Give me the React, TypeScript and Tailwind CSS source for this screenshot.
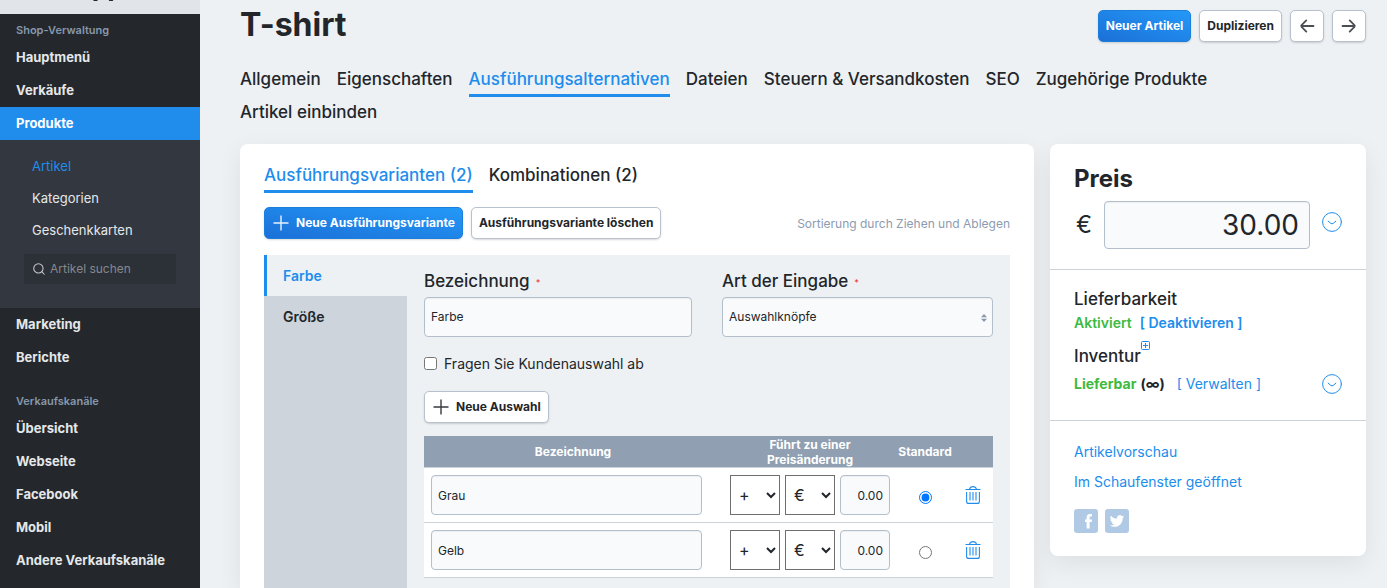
import type { ReactNode } from 'react';
import { useState } from 'react';
import { Search } from 'lucide-react';

interface Choice {
    id: string;
    name: string;
    surcharge: string;
}

const productTabs = [
    'Allgemein',
    'Eigenschaften',
    'Ausführungsalternativen',
    'Dateien',
    'Steuern & Versandkosten',
    'SEO',
    'Zugehörige Produkte',
    'Artikel einbinden',
];

const channels = ['Übersicht', 'Webseite', 'Facebook', 'Mobil', 'Andere Verkaufskanäle'];

const choices: Choice[] = [
    { id: 'grau', name: 'Grau', surcharge: '0.00' },
    { id: 'gelb', name: 'Gelb', surcharge: '0.00' },
];

const inputClass =
    'h-10 rounded border border-[#b4bfcc] bg-[#f9fafc] px-1.5 text-xs text-[#22262a] shadow-[inset_0_1px_1px_rgba(0,0,0,0.05)]';

function NavLink({ children, active }: { children: ReactNode; active?: boolean }) {
    return (
        <a
            href="#"
            className={`block px-4 text-[13px] leading-[33px] font-bold ${active ? 'bg-[#208ded] text-white' : 'text-[#e4e7ea]'}`}
        >
            {children}
        </a>
    );
}

function NavHeading({ children }: { children: ReactNode }) {
    return <h2 className="px-4 text-[11px] leading-[22px] font-semibold text-[#8798ad]">{children}</h2>;
}

function Tab({ children, active }: { children: ReactNode; active?: boolean }) {
    return (
        <a
            href="#"
            className={`border-b-3 text-[17px] leading-[30px] font-medium ${active ? 'border-[#208ded] text-[#208ded]' : 'border-transparent'}`}
        >
            {children}
        </a>
    );
}

function Button({ children, primary, label }: { children: ReactNode; primary?: boolean; label?: string }) {
    return (
        <button
            type="button"
            aria-label={label}
            className={`flex h-8 shrink-0 items-center gap-1.5 rounded-[5px] border px-[7px] text-xs font-bold whitespace-nowrap shadow-[0_1px_2px_rgba(0,0,0,0.15)] ${
                primary
                    ? 'border-[#1d7fdc] bg-linear-to-tr from-[#1c70d8] to-[#2499f7] text-white'
                    : 'border-[#b8c2cf] bg-white'
            }`}
        >
            {children}
        </button>
    );
}

function PlusIcon() {
    return (
        <svg viewBox="0 0 18 18" fill="none" stroke="currentColor" strokeWidth="1.4" className="size-[18px] opacity-90">
            <path d="M1.5 9 H16.5 M9 1.5 V16.5" />
        </svg>
    );
}

function ArrowIcon({ direction }: { direction: 'left' | 'right' }) {
    return (
        <svg
            viewBox="0 0 18 18"
            fill="none"
            stroke="#4a4e53"
            strokeWidth="1.8"
            strokeLinecap="round"
            strokeLinejoin="round"
            className={`size-[18px] ${direction === 'right' ? 'rotate-180' : ''}`}
        >
            <path d="M15.5 9 H3.2 M8.3 3.4 L3.6 8.1 Q2.8 9 3.6 9.9 L8.3 14.6" />
        </svg>
    );
}

function TrashIcon() {
    return (
        <svg viewBox="0 0 16 18" fill="none" stroke="currentColor" strokeWidth="1.1" className="h-[18px] w-4">
            <path d="M0.5 3.5 H15.5 M4.5 3.2 C5 1.4 6 0.6 8 0.6 C10 0.6 11 1.4 11.5 3.2" />
            <path d="M1.6 6 V15.4 Q1.6 17.4 3.6 17.4 H12.4 Q14.4 17.4 14.4 15.4 V6" />
            <path d="M5 6 V14.6 M8 6 V14.6 M11 6 V14.6" />
        </svg>
    );
}

function ExpandButton({ label }: { label: string }) {
    return (
        <button type="button" aria-label={label} className="size-5 shrink-0 text-[#208ded]">
            <svg viewBox="0 0 20 20" fill="none" stroke="currentColor" strokeLinecap="round" className="size-5">
                <circle cx="10" cy="10" r="9.4" />
                <path d="M6.2 9.2 L8.8 11.4 Q10 12.2 11.2 11.4 L13.8 9.2" />
            </svg>
        </button>
    );
}

function Sidebar() {
    return (
        <aside className="w-50 shrink-0 bg-[#24272b]">
            <div className="h-3.5 bg-[#e1e5ea]">
                <svg viewBox="0 0 200 14" fill="none" stroke="#24272b" strokeWidth="1.4" className="h-3.5 w-50">
                    <path d="M93.5 0 Q95.5 0.8 97.5 0 M109 0 Q111 0.8 113 0" />
                </svg>
            </div>
            <nav aria-label="Shop">
                <div className="pt-[5px]">
                    <NavHeading>Shop-Verwaltung</NavHeading>
                </div>
                <NavLink>Hauptmenü</NavLink>
                <NavLink>Verkäufe</NavLink>
                <NavLink active>Produkte</NavLink>
                <div className="bg-[#33373f] px-6 pt-2.5 pb-6">
                    <ul className="px-2 text-[13px] leading-8 text-[#e4e7ea]">
                        <li><a href="#" className="text-[#208ded]">Artikel</a></li>
                        <li><a href="#">Kategorien</a></li>
                        <li><a href="#">Geschenkkarten</a></li>
                    </ul>
                    <label className="mt-2 flex h-[30px] items-center gap-1 bg-[#2c3037] px-2">
                        <Search size={14} strokeWidth={1.8} className="shrink-0 text-[#c8ccd1]" />
                        <input
                            type="search"
                            aria-label="Artikel suchen"
                            placeholder="Artikel suchen"
                            className="w-full min-w-0 text-xs placeholder:text-[#85898f]"
                        />
                    </label>
                </div>
                <NavLink>Marketing</NavLink>
                <NavLink>Berichte</NavLink>
                <div className="pt-4">
                    <NavHeading>Verkaufskanäle</NavHeading>
                </div>
                {channels.map((channel) => (
                    <NavLink key={channel}>{channel}</NavLink>
                ))}
            </nav>
        </aside>
    );
}

function Required() {
    return <span className="ml-1.5 align-middle text-[9px] text-[#f0413c]">*</span>;
}

function ChoiceTable() {
    const [preset, setPreset] = useState('grau');

    return (
        <table className="mt-[13px] w-full table-fixed border-collapse bg-white">
            <thead className="bg-[#909fb1] text-xs leading-[15px] text-white">
                <tr className="h-8 border-b border-[#c9d1da]">
                    <th>Bezeichnung</th>
                    <th className="w-44 px-8">Führt zu einer Preisänderung</th>
                    <th className="w-[54px]">Standard</th>
                    <th className="w-[41px]" aria-label="Löschen" />
                </tr>
            </thead>
            <tbody>
                {choices.map((choice) => (
                    <tr key={choice.id} className="h-[55px] border-b border-[#cbd2da]">
                        <td className="pr-5 pl-[7px]">
                            <input
                                type="text"
                                aria-label="Bezeichnung"
                                defaultValue={choice.name}
                                className={`${inputClass} block w-full`}
                            />
                        </td>
                        <td>
                            <div className="flex gap-[5px] px-2">
                                <select aria-label="Vorzeichen" className="h-10 w-[50px] border border-[#6f6f6f] bg-white px-1 text-base">
                                    <option>+</option>
                                    <option>-</option>
                                </select>
                                <select aria-label="Einheit" className="h-10 w-[50px] border border-[#6f6f6f] bg-white px-1 text-base">
                                    <option>€</option>
                                    <option>%</option>
                                </select>
                                <input
                                    type="text"
                                    aria-label="Preisänderung"
                                    defaultValue={choice.surcharge}
                                    className={`${inputClass} w-[50px] text-right`}
                                />
                            </div>
                        </td>
                        <td>
                            <input
                                type="radio"
                                name="preset"
                                aria-label={`${choice.name} als Standard`}
                                checked={preset === choice.id}
                                onChange={() => setPreset(choice.id)}
                                className="mx-auto mt-1 block size-[13px]"
                            />
                        </td>
                        <td>
                            <button type="button" aria-label="Löschen" className="mx-auto block text-[#208ded]">
                                <TrashIcon />
                            </button>
                        </td>
                    </tr>
                ))}
            </tbody>
        </table>
    );
}

function VariantsCard() {
    return (
        <section className="min-w-0 flex-1 rounded-t-lg bg-white px-6 pt-4 shadow-[0_8px_24px_rgba(0,0,0,0.07)]">
            <div className="flex gap-4">
                <Tab active>Ausführungsvarianten (2)</Tab>
                <Tab>Kombinationen (2)</Tab>
            </div>
            <div className="mt-3.5 flex items-center gap-2">
                <Button primary>
                    <PlusIcon />
                    Neue Ausführungsvariante
                </Button>
                <Button>Ausführungsvariante löschen</Button>
                <p className="ml-auto pt-0.5 text-xs text-[#8d9bb0]">Sortierung durch Ziehen und Ablegen</p>
            </div>

            <div className="mt-4 flex h-full bg-[#edf1f4]">
                <div className="w-[143px] shrink-0 bg-[#cdd4dc] text-sm leading-[41px] font-semibold">
                    <a href="#" className="block border-l-3 border-[#208ded] bg-[#edf1f4] px-4 text-[#208ded]">Farbe</a>
                    <a href="#" className="block border-l-3 border-transparent px-4">Größe</a>
                </div>
                <div className="min-w-0 flex-1 px-[17px] pt-4">
                    <div className="grid grid-cols-[268fr_271fr] gap-[30px]">
                        <label className="flex flex-col gap-1 text-[17px] leading-[21px] font-medium">
                            <span>Bezeichnung<Required /></span>
                            <input type="text" defaultValue="Farbe" className={`${inputClass} font-normal`} />
                        </label>
                        <label className="flex flex-col gap-1 text-[17px] leading-[21px] font-medium">
                            <span>Art der Eingabe<Required /></span>
                            <span className="relative flex">
                                <select className={`${inputClass} w-full appearance-none font-normal`}>
                                    <option>Auswahlknöpfe</option>
                                    <option>Dropdown-Liste</option>
                                </select>
                                <svg viewBox="0 0 6 8" className="pointer-events-none absolute top-[17px] right-1.5 h-2 w-1.5 fill-[#8798ad]">
                                    <path d="M3 0 L6 3.3 H0 Z M0 4.7 H6 L3 8 Z" />
                                </svg>
                            </span>
                        </label>
                    </div>
                    <label className="mt-[17px] flex items-center gap-[7px] text-sm leading-5">
                        <input type="checkbox" className="size-[13px]" />
                        Fragen Sie Kundenauswahl ab
                    </label>
                    <div className="mt-[17px] flex">
                        <Button>
                            <PlusIcon />
                            Neue Auswahl
                        </Button>
                    </div>
                    <ChoiceTable />
                </div>
            </div>
        </section>
    );
}

function PriceCard() {
    return (
        <aside className="w-79 shrink-0 self-start rounded-lg bg-white text-sm shadow-[0_8px_24px_rgba(0,0,0,0.07)]">
            <div className="border-b border-[#cbd2da] px-6 pt-4 pb-5">
                <h2 className="text-2xl leading-[37px] font-bold">Preis</h2>
                <div className="mt-1 flex items-center">
                    <label htmlFor="price" className="w-[30px] shrink-0 pl-0.5 text-2xl">€</label>
                    <input
                        id="price"
                        type="text"
                        defaultValue="30.00"
                        className="h-12 w-full min-w-0 rounded border border-[#b4bfcc] bg-[#f9fafc] px-2.5 text-right text-[28px] shadow-[inset_0_1px_1px_rgba(0,0,0,0.05)]"
                    />
                    <div className="ml-3 flex shrink-0 self-start pt-[11px]">
                        <ExpandButton label="Preisoptionen" />
                    </div>
                </div>
            </div>
            <div className="border-b border-[#cbd2da] px-6 pt-[17px] pb-6">
                <h3 className="text-[17px] leading-6 font-medium">Lieferbarkeit</h3>
                <p className="flex gap-2 leading-6 font-semibold">
                    <span className="text-[#3dba40]">Aktiviert</span>
                    <a href="#" className="text-[#208ded]">[ Deaktivieren ]</a>
                </p>
                <h3 className="mt-[5px] flex text-[17px] leading-8 font-medium">
                    Inventur
                    <a href="#" aria-label="Hilfe zur Inventur" className="text-[#208ded]">
                        <svg viewBox="0 0 9 9" fill="none" stroke="currentColor" className="mt-px size-[9px]">
                            <rect x="0.5" y="0.5" width="8" height="8" rx="1" />
                            <path d="M2 4.5 H7 M4.5 2 V7" />
                        </svg>
                    </a>
                </h3>
                <div className="flex items-center leading-6">
                    <span className="font-bold text-[#3dba40]">Lieferbar</span>
                    <span className="ml-1 font-bold">(∞)</span>
                    <a href="#" className="ml-3 text-[#208ded]">[ Verwalten ]</a>
                    <div className="ml-auto flex">
                        <ExpandButton label="Inventur verwalten" />
                    </div>
                </div>
            </div>
            <div className="flex flex-col items-start px-6 pt-4 pb-[23px] leading-[30px] text-[#208ded]">
                <a href="#">Artikelvorschau</a>
                <a href="#">Im Schaufenster geöffnet</a>
                <div className="mt-3 flex gap-[7px]">
                    <a href="#" aria-label="Facebook" className="block size-6 rounded-[3px] bg-[#b0cae5]">
                        <svg viewBox="0 0 24 24" className="size-6 fill-white">
                            <path d="M12.6 19.5 V13.1 H11 V10.4 H12.6 V8.8 C12.6 6.4 13.8 5.1 16 5.1 H18 V7.6 H16.7 C15.8 7.6 15.6 8 15.6 8.8 V10.4 H18 L17.7 13.1 H15.6 V19.5 Z" />
                        </svg>
                    </a>
                    <a href="#" aria-label="Twitter" className="block size-6 rounded-[3px] bg-[#b0cae5]">
                        <svg viewBox="-8 -8 40 40" className="size-6 fill-white">
                            <path d="M24 4.6a10 10 0 0 1-2.8.8 5 5 0 0 0 2.2-2.7 10 10 0 0 1-3.1 1.2 4.9 4.9 0 0 0-8.4 4.5A14 14 0 0 1 1.7 3.1a4.9 4.9 0 0 0 1.5 6.6 5 5 0 0 1-2.2-.6v.1a4.9 4.9 0 0 0 3.9 4.8 5 5 0 0 1-2.2.1 4.9 4.9 0 0 0 4.6 3.4A9.9 9.9 0 0 1 0 19.5 14 14 0 0 0 7.5 21.7c9.1 0 14-7.5 14-14v-.6A10 10 0 0 0 24 4.6z" />
                        </svg>
                    </a>
                </div>
            </div>
        </aside>
    );
}

export default function App() {
    return (
        <div className="flex h-screen overflow-hidden bg-[#edf1f4] font-['Inter','Liberation_Sans',sans-serif] text-[#22262a]">
            <Sidebar />
            <main className="flex min-w-0 flex-1 flex-col pr-[21px] pl-10">
                <header className="flex items-start justify-between">
                    <h1 className="pt-1 text-[32px] leading-[42px] font-bold">T-shirt</h1>
                    <div className="flex gap-2 pt-2.5">
                        <Button primary>Neuer Artikel</Button>
                        <Button>Duplizieren</Button>
                        <Button label="Vorheriger Artikel"><ArrowIcon direction="left" /></Button>
                        <Button label="Nächster Artikel"><ArrowIcon direction="right" /></Button>
                    </div>
                </header>
                <nav aria-label="Artikel" className="mt-[18px] flex flex-wrap gap-x-4 pr-10">
                    {productTabs.map((tab) => (
                        <Tab key={tab} active={tab === 'Ausführungsalternativen'}>{tab}</Tab>
                    ))}
                </nav>
                <div className="mt-3.5 flex min-h-0 flex-1 gap-4">
                    <VariantsCard />
                    <PriceCard />
                </div>
            </main>
        </div>
    );
}
